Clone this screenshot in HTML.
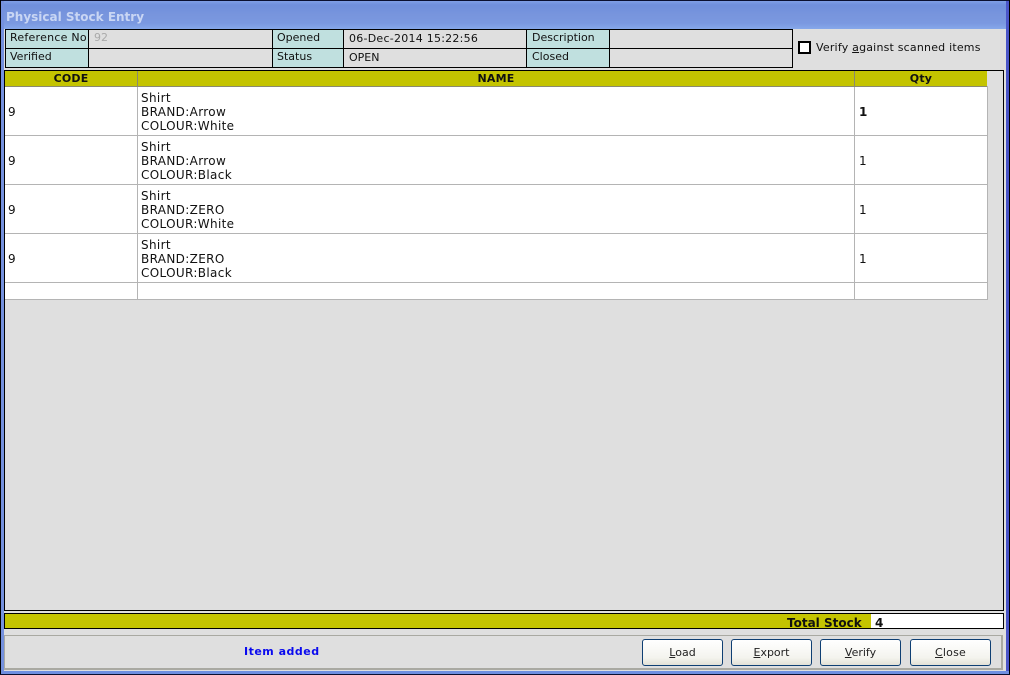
<!DOCTYPE html>
<html><head><meta charset="utf-8"><style>
html,body{margin:0;padding:0;background:#000}
#w{position:relative;width:1010px;height:675px;overflow:hidden;background:#dfdfdf;font:11px/14px "DejaVu Sans","Liberation Sans",sans-serif;color:#111}
#w div{position:absolute;box-sizing:border-box;white-space:nowrap}
.k{background:#000}
.l{background:#c0e0df}
.g{background:#b4b4b4}
.c{font-size:12px;letter-spacing:.35px}
.h{font-weight:bold;font-size:11px;letter-spacing:.2px;text-align:center;top:72px;line-height:14px;color:#111}
.b{top:639px;width:81px;height:27px;border:1px solid #0f3f73;border-radius:3px;background:linear-gradient(#fff,#f4f4ee 70%,#e2e0d6);text-align:center;line-height:25px;color:#222}
u{text-underline-offset:1px}
</style></head><body><div id="w">
<div style="left:0;top:0;width:1010px;height:29px;background:linear-gradient(#7f9fe6 0,#6f8fdc 4px,#7895dd 14px,#7a98e0 22px,#86a8ea 28px);border-top:1px solid #0a1030"></div>
<div style="left:6px;top:10px;font-weight:bold;font-size:12px;color:#c9d6f4">Physical Stock Entry</div>
<div style="left:0;top:0;width:1px;height:675px;background:#000"></div>
<div style="left:1px;top:1px;width:3px;height:673px;background:#7591de"></div>
<div style="right:0;top:0;width:1px;height:675px;background:#000"></div>
<div style="right:1px;top:1px;width:3px;height:673px;background:#4a55c8"></div>
<div style="left:1px;top:671px;width:1008px;height:3px;background:#6f8fe0"></div>
<div style="left:0;top:674px;width:1010px;height:1px;background:#0a1030"></div>

<!-- header table -->
<div style="left:5px;top:29px;width:788px;height:39px;border:1px solid #000;background:#dfdfdf"></div>
<div class="l" style="left:6px;top:30px;width:82px;height:37px"></div>
<div class="l" style="left:273px;top:30px;width:70px;height:37px"></div>
<div class="l" style="left:527px;top:30px;width:82px;height:37px"></div>
<div class="k" style="left:6px;top:48px;width:786px;height:1px"></div>
<div class="k" style="left:88px;top:30px;width:1px;height:37px"></div>
<div class="k" style="left:272px;top:30px;width:1px;height:37px"></div>
<div class="k" style="left:343px;top:30px;width:1px;height:37px"></div>
<div class="k" style="left:526px;top:30px;width:1px;height:37px"></div>
<div class="k" style="left:609px;top:30px;width:1px;height:37px"></div>
<div style="left:10px;top:31px;letter-spacing:.25px">Reference No</div>
<div style="left:94px;top:31px;color:#aaa">92</div>
<div style="left:10px;top:50px">Verified</div>
<div style="left:277px;top:31px">Opened</div>
<div style="left:277px;top:50px">Status</div>
<div style="left:349px;top:32px;letter-spacing:.25px">06-Dec-2014 15:22:56</div>
<div style="left:349px;top:51px">OPEN</div>
<div style="left:532px;top:31px">Description</div>
<div style="left:532px;top:50px">Closed</div>

<div style="left:798px;top:41px;width:13px;height:13px;border:2px solid #000;background:#fff"></div>
<div style="left:816px;top:41px;letter-spacing:.2px">Verify <u>a</u>gainst scanned items</div>

<!-- grid -->
<div style="left:4px;top:70px;width:1000px;height:541px;border:1px solid #000;background:#dfdfdf"></div>
<div style="left:5px;top:71px;width:982px;height:229px;background:#fff"></div>
<div style="left:5px;top:71px;width:982px;height:15px;background:#c4c400"></div>
<div style="left:5px;top:86px;width:983px;height:1px;background:#8a8a70"></div>
<div class="g" style="left:5px;top:135px;width:983px;height:1px"></div>
<div class="g" style="left:5px;top:184px;width:983px;height:1px"></div>
<div class="g" style="left:5px;top:233px;width:983px;height:1px"></div>
<div class="g" style="left:5px;top:282px;width:983px;height:1px"></div>
<div class="g" style="left:5px;top:299px;width:983px;height:1px"></div>
<div style="left:137px;top:71px;width:1px;height:15px;background:#8a8a70"></div>
<div style="left:854px;top:71px;width:1px;height:15px;background:#8a8a70"></div>
<div class="g" style="left:137px;top:87px;width:1px;height:213px"></div>
<div class="g" style="left:854px;top:87px;width:1px;height:213px"></div>
<div class="g" style="left:987px;top:86px;width:1px;height:214px"></div>
<div class="h" style="left:5px;width:132px">CODE</div>
<div class="h" style="left:138px;width:716px">NAME</div>
<div class="h" style="left:855px;width:132px">Qty</div>

<div class="c" style="left:8px;top:105px">9</div>
<div class="c" style="left:141px;top:91px">Shirt<br>BRAND:Arrow<br>COLOUR:White</div>
<div style="left:859px;top:105px;font-weight:bold;font-size:12px">1</div>
<div class="c" style="left:8px;top:154px">9</div>
<div class="c" style="left:141px;top:140px">Shirt<br>BRAND:Arrow<br>COLOUR:Black</div>
<div class="c" style="left:859px;top:154px">1</div>
<div class="c" style="left:8px;top:203px">9</div>
<div class="c" style="left:141px;top:189px">Shirt<br>BRAND:ZERO<br>COLOUR:White</div>
<div class="c" style="left:859px;top:203px">1</div>
<div class="c" style="left:8px;top:252px">9</div>
<div class="c" style="left:141px;top:238px">Shirt<br>BRAND:ZERO<br>COLOUR:Black</div>
<div class="c" style="left:859px;top:252px">1</div>

<!-- total -->
<div style="left:4px;top:613px;width:1000px;height:16px;border:1px solid #000;background:#c4c400"></div>
<div style="left:871px;top:614px;width:132px;height:14px;background:#fff"></div>
<div style="left:787px;top:616px;font-weight:bold;font-size:12px;line-height:14px">Total Stock</div>
<div style="left:875px;top:616px;font-weight:bold;font-size:12px;line-height:14px">4</div>

<!-- bottom panel -->
<div style="left:4px;top:635px;width:999px;height:35px;border:1px solid #a9a9a2;border-right-width:2px;border-bottom-width:2px"></div>
<div style="left:244px;top:645px;font-weight:bold;letter-spacing:.5px;color:#0a0aee">Item added</div>
<div class="b" style="left:642px"><u>L</u>oad</div>
<div class="b" style="left:731px"><u>E</u>xport</div>
<div class="b" style="left:820px"><u>V</u>erify</div>
<div class="b" style="left:910px;letter-spacing:.2px"><u>C</u>lose</div>
</div></body></html>
